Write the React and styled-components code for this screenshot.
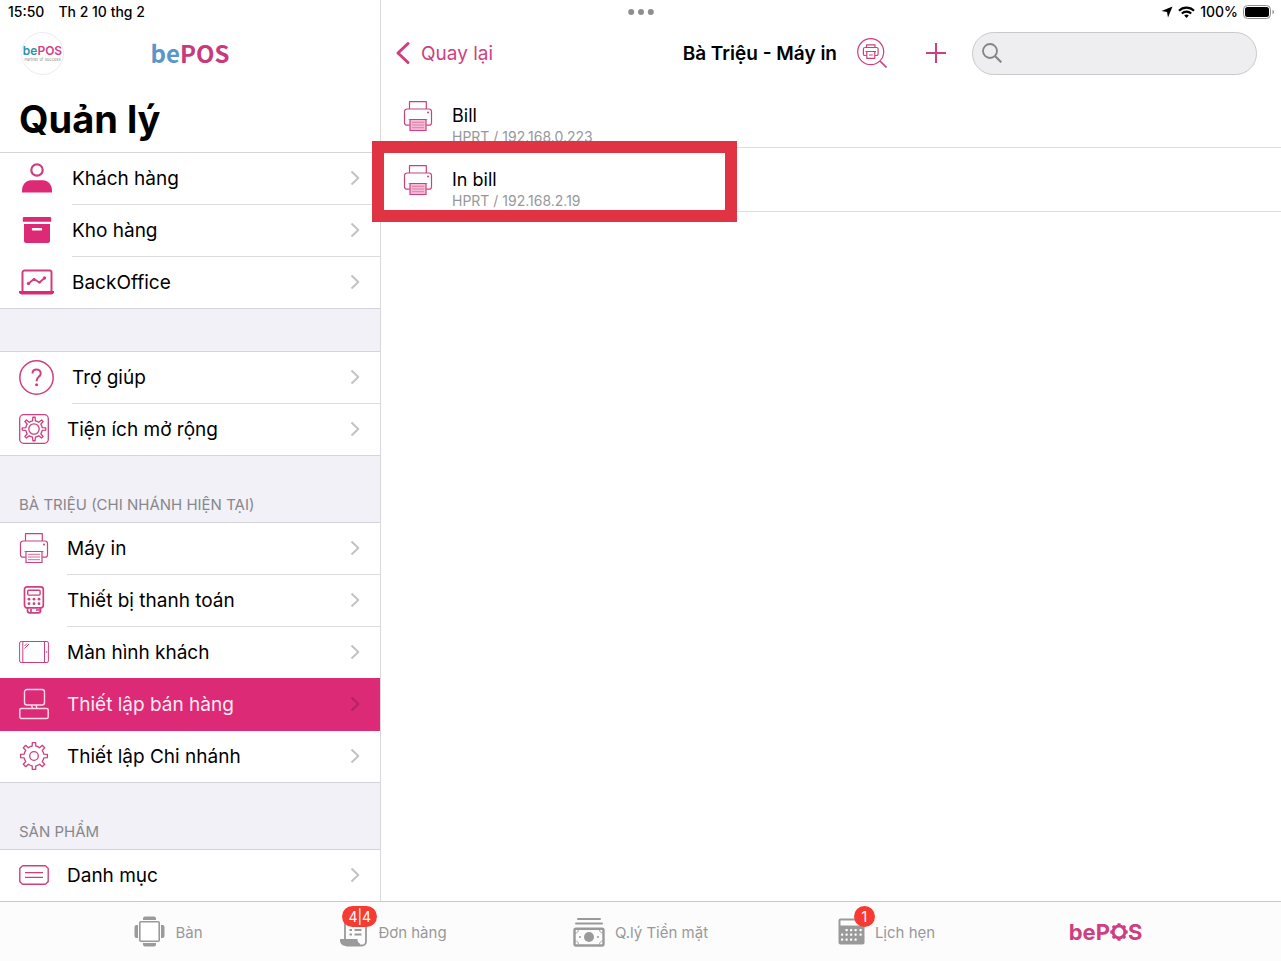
import React from 'react';
import styled, { createGlobalStyle, css } from 'styled-components';

const PINK = '#dc2a76';
const LINE_PINK = '#cf3f80';
const GREY = '#9a9a9a';

const GlobalStyle = createGlobalStyle`
  *, *::before, *::after { box-sizing: border-box; }
  body {
    margin: 0;
    background: #fff;
    color: #000;
    font-family: Inter, "Liberation Sans", sans-serif;
  }
  button, input { font: inherit; color: inherit; }
  h1, h2, h3, p, ul { margin: 0; padding: 0; }
  svg { display: block; flex: none; }
`;

/* ---------- shell ---------- */

const Screen = styled.div`
  position: relative;
  display: flex;
  flex-direction: column;
  height: 100vh;
  overflow: hidden;
`;

const StatusBar = styled.header`
  position: absolute;
  inset: 0 0 auto 0;
  z-index: 3;
  display: grid;
  grid-template-columns: 1fr auto 1fr;
  align-items: center;
  height: 24px;
  padding: 0 6px;
  font-size: 14px;
  font-weight: 500;
  line-height: 24px;
`;

const StatusSide = styled.div`
  display: flex;
  align-items: center;
  justify-content: ${(p) => (p.$end ? 'flex-end' : 'flex-start')};
  gap: ${(p) => (p.$end ? '5px' : '14px')};
  padding-left: 2px;
`;

const Split = styled.div`
  flex: 1;
  min-height: 0;
  display: flex;
`;

const Sidebar = styled.aside`
  flex: none;
  width: 381px;
  max-width: 45%;
  padding-top: 24px;
  border-right: 1px solid #d9d9dc;
  overflow-y: auto;
  scrollbar-width: none;
`;

const Detail = styled.main`
  flex: 1;
  min-width: 0;
  padding-top: 24px;
`;

/* ---------- sidebar ---------- */

const BrandBar = styled.div`
  display: grid;
  grid-template-columns: 1fr auto 1fr;
  align-items: center;
  height: 58px;
  padding: 0 21px;
`;

const Avatar = styled.div`
  display: flex;
  flex-direction: column;
  align-items: center;
  justify-content: center;
  width: 43px;
  height: 43px;
  border: 1px solid #ececee;
  border-radius: 50%;
`;

const Brand = styled.span`
  font-family: "Noto Sans CJK SC", "Open Sans", sans-serif;
  font-size: 24px;
  line-height: 32px;
  font-weight: 700;
  color: #c93a7d;
  span { color: #5b96c8; }
`;

const AvatarBrand = styled.span`
  font-size: 12px;
  line-height: 12px;
  font-weight: 600;
  color: #d43f87;
  span { color: #2d93a8; }
`;

const AvatarTag = styled.span`
  font-size: 4px;
  line-height: 5px;
  color: #8a8a8a;
  white-space: nowrap;
`;

const PageTitle = styled.h1`
  height: 70px;
  padding: 13px 19px 0;
  font-size: 38px;
  line-height: 48px;
  font-weight: 700;
`;

const SectionHead = styled.h2`
  display: flex;
  align-items: flex-end;
  height: ${(p) => (p.$empty ? '42px' : '66px')};
  padding: 0 19px 7px;
  background: #f1f1f7;
  color: #87878c;
  font-size: 15px;
  line-height: 20px;
  font-weight: 400;
`;

const Group = styled.ul`
  list-style: none;
  border-top: 1px solid #d4d4da;
  border-bottom: 1px solid #d4d4da;
`;

const Row = styled.a`
  display: flex;
  align-items: stretch;
  gap: 18px;
  height: 52px;
  padding-left: 19px;
  color: #000;
  text-decoration: none;
  ${(p) => p.$active && css`
    position: relative;
    height: 53px;
    margin-top: -1px;
    background: ${PINK};
    color: #ffeaf3;
  `}
`;

const RowItem = styled.li`
  &:last-child > a { height: 51px; }
  &:last-child > a > span:last-child { border-bottom: 0; }
`;

const IconSlot = styled.span`
  flex: none;
  display: flex;
  align-items: center;
  justify-content: center;
  width: ${(p) => (p.$wide ? '35px' : '30px')};
  padding-bottom: 2px;
`;

const RowBody = styled.span`
  flex: 1;
  display: flex;
  align-items: center;
  justify-content: space-between;
  padding: 0 20px 1px 0;
  border-bottom: 1px solid ${(p) => (p.$active ? 'transparent' : '#dddde0')};
  font-size: 19px;
  line-height: 26px;
`;

const Label = styled.span`
  padding-top: 2px;
`;

/* ---------- detail panel ---------- */

const Toolbar = styled.div`
  display: flex;
  align-items: center;
  height: 58px;
  padding: 0 24px 0 14px;
`;

const PlainButton = styled.button`
  display: flex;
  align-items: center;
  gap: 10px;
  padding: 0;
  border: 0;
  background: none;
  color: ${LINE_PINK};
  font-size: 19px;
  line-height: 26px;
  cursor: pointer;
`;

const DetailTitle = styled.h2`
  margin: 0 20px 0 auto;
  padding-top: 2px;
  font-size: 19px;
  line-height: 26px;
  font-weight: 600;
  white-space: nowrap;
`;

const Actions = styled.div`
  display: flex;
  align-items: center;
  gap: 38px;
  margin-right: 25px;
`;

const SearchBox = styled.label`
  flex: 0 1 285px;
  display: flex;
  align-items: center;
  gap: 8px;
  min-width: 120px;
  height: 43px;
  padding: 0 16px 0 9px;
  border: 1px solid #c9c9cd;
  border-radius: 22px;
  background: #eeeef0;
`;

const SearchInput = styled.input`
  flex: 1;
  min-width: 0;
  border: 0;
  outline: 0;
  background: none;
  font-size: 18px;
`;

const PrinterList = styled.ul`
  padding-top: 2px;
  list-style: none;
`;

const PrinterRow = styled.li`
  position: relative;
  display: flex;
  gap: 19px;
  height: 64px;
  padding: 16px 22px 0;
  border-bottom: 1px solid #dddde0;
`;

const PrinterText = styled.div`
  display: flex;
  flex-direction: column;
  padding-top: 3px;
`;

const PrinterName = styled.h3`
  font-size: 18px;
  line-height: 26px;
  font-weight: 400;
`;

const PrinterAddress = styled.p`
  font-size: 14px;
  line-height: 16px;
  color: #98989c;
`;

const Highlight = styled.div`
  position: absolute;
  z-index: 2;
  top: -7px;
  left: -9px;
  width: 365px;
  height: 81px;
  border: 12px solid #e03445;
  pointer-events: none;
`;

/* ---------- tab bar ---------- */

const TabBar = styled.nav`
  flex: none;
  display: grid;
  grid-template-columns: 205fr 245fr 249fr 243fr 195fr;
  height: 60px;
  padding: 0 78px 0 66px;
  border-top: 1px solid #c9c9cc;
  background: #fcfcfc;
  z-index: 1;
`;

const Tab = styled.a`
  display: flex;
  align-items: center;
  justify-content: center;
  gap: 10px;
  color: #98989a;
  font-size: 15px;
  line-height: 20px;
  text-decoration: none;
  white-space: nowrap;
`;

const TabIcon = styled.span`
  position: relative;
  display: flex;
`;

const Badge = styled.span`
  position: absolute;
  top: ${(p) => (p.$round ? '-12px' : '-10px')};
  left: ${(p) => (p.$round ? '16px' : '2px')};
  min-width: 21px;
  height: 21px;
  padding: 0 6px;
  border-radius: 11px;
  background: #f63c32;
  color: #fff;
  font-size: 14px;
  line-height: 21px;
  text-align: center;
`;

const TabBrand = styled.span`
  display: flex;
  align-items: center;
  color: ${LINE_PINK};
  font-size: 22px;
  line-height: 26px;
  font-weight: 700;
`;

/* ---------- icons ---------- */

function gearPath(cx, cy, teeth, outer, inner, tip = 0.2, root = 0.3) {
  const step = (Math.PI * 2) / teeth;
  const pt = (r, a) => `${(cx + r * Math.sin(a)).toFixed(2)} ${(cy - r * Math.cos(a)).toFixed(2)}`;
  let d = '';
  for (let i = 0; i < teeth; i += 1) {
    const a = i * step;
    d += `${i ? 'L' : 'M'}${pt(outer, a - tip * step)}L${pt(outer, a + tip * step)}L${pt(inner, a + root * step)}`;
    d += `A${inner} ${inner} 0 0 1 ${pt(inner, a + (1 - root) * step)}`;
  }
  return `${d}Z`;
}

const Svg = ({ w, h, children, ...rest }) => (
  <svg width={w} height={h} viewBox={`0 0 ${w} ${h}`} fill="none" stroke={LINE_PINK} strokeWidth="1.3" strokeLinejoin="round" aria-hidden="true" {...rest}>
    {children}
  </svg>
);

const CustomerIcon = () => (
  <Svg w={35} h={30} stroke="none" fill={PINK}>
    <circle cx="18" cy="7" r="5.700" fill="none" stroke={LINE_PINK} strokeWidth="2.200" />
    <path d="M3 29.500v-1.700C3 21.500 7 17.300 12 17.300h12c5 0 9 4.200 9 10.500v1.700z" />
  </Svg>
);

const BoxIcon = () => (
  <Svg w={35} h={28} stroke="none" fill={PINK}>
    <path d="M5 1h26a1.200 1.200 0 0 1 1.200 1.200v3.600H3.800V2.200A1.200 1.200 0 0 1 5 1z" />
    <path fillRule="evenodd" d="M5 8h26v17a2 2 0 0 1-2 2H7a2 2 0 0 1-2-2zm9 4a1 1 0 0 0 0 2.500h8a1 1 0 0 0 0-2.500z" />
  </Svg>
);

const LaptopIcon = () => (
  <Svg w={35} h={26} strokeWidth="2">
    <path d="M3.500 22V3.500a2 2 0 0 1 2-2h25a2 2 0 0 1 2 2V22" />
    <path d="M0 22h35a3 3 0 0 1-2.500 3.500h-30A3 3 0 0 1 0 22z" fill={PINK} stroke="none" />
    <path d="M9.500 14.500l5.500-4.500 5.500 3.500 5-4.500" strokeWidth="1.800" />
    <g fill={LINE_PINK} stroke="none">
      <circle cx="9.500" cy="14.500" r="1.700" /><circle cx="15" cy="10.300" r="1.300" />
      <circle cx="20.500" cy="13.300" r="1.300" /><circle cx="25.500" cy="9" r="1.700" />
    </g>
  </Svg>
);

const HelpIcon = () => (
  <Svg w={35} h={35} strokeWidth="1.500">
    <circle cx="17.500" cy="17.500" r="16.700" />
    <path d="M13.500 13.500c0-2.500 1.700-4 4-4s4.200 1.500 4.200 3.900c0 3.300-4 3.400-4 7.200v.6" strokeWidth="2" />
    <circle cx="17.600" cy="24.800" r="1.500" fill={LINE_PINK} stroke="none" />
  </Svg>
);

const ExtensionIcon = () => (
  <Svg w={30} h={30}>
    <rect x="0.700" y="0.700" width="28.600" height="28.600" rx="4" />
    <path d={gearPath(15, 15, 8, 11.800, 8.300, 0.12, 0.22)} />
    <circle cx="15" cy="15" r="5.200" />
  </Svg>
);

const GearIcon = () => (
  <Svg w={30} h={30}>
    <path d={gearPath(15, 15, 8, 13.500, 10, 0.16, 0.24)} />
    <circle cx="15" cy="15" r="4.300" />
  </Svg>
);

const PrinterIcon = ({ tinted }) => (
  <Svg w={30} h={32} strokeWidth="1.200">
    <path d="M6.500 9V1.600h16.800V9" />
    <path d="M6.500 25.200H4a2.500 2.500 0 0 1-2.500-2.500V11.500A2.500 2.500 0 0 1 4 9h22a2.500 2.500 0 0 1 2.500 2.500v11.200a2.500 2.500 0 0 1-2.500 2.500h-2.700" />
    <circle cx="25" cy="12.600" r="1" fill={LINE_PINK} stroke="none" />
    <path d="M7 19.500h16v11H7z" fill={tinted ? '#f3bdd6' : '#fff'} />
    <path d="M5.500 19.500h19M9 22.300h12M9 25h12M9 27.700h12" strokeWidth={tinted ? 0.5 : 0.8} />
  </Svg>
);

const TerminalIcon = () => (
  <Svg w={30} h={30} strokeWidth="1.700">
    <rect x="5.500" y="1.800" width="18.800" height="21" rx="2.500" />
    <rect x="8.700" y="5.300" width="12.400" height="4.800" rx="1" strokeWidth="1.400" />
    <g fill={LINE_PINK} stroke="none">
      {[14.200, 18.700].map((y) => [10, 15, 20].map((x) => <circle key={`${x}${y}`} cx={x} cy={y} r="1.400" />))}
    </g>
    <path d="M8.500 23v2.800a2 2 0 0 0 2 2h9a2 2 0 0 0 2-2V23M12 24v3.500M17 25h4" />
  </Svg>
);

const DisplayIcon = () => (
  <Svg w={30} h={24} strokeWidth="1">
    <rect x="0.600" y="1.500" width="28.800" height="21" rx="1.500" />
    <path d="M3.800 1.500v21M25.500 1.500v21M5.500 6l2.500-2.500M5.500 8.500l4.500-4.500" />
    <circle cx="27.500" cy="12" r="0.800" fill={LINE_PINK} stroke="none" />
  </Svg>
);

const RegisterIcon = () => (
  <Svg w={30} h={32} stroke="#fbdcea" strokeWidth="1.400">
    <rect x="5.500" y="1.500" width="20" height="15.500" rx="2.500" />
    <path d="M12.500 17l1 3.500M17 17l1 3.500" />
    <rect x="0.800" y="20.500" width="28.400" height="10" rx="1.500" />
  </Svg>
);

const CategoryIcon = () => (
  <Svg w={30} h={20} strokeWidth="1.400">
    <path d="M4 .8h22c1.500 0 1.800 1.600 3.200 2.600v13.200c-1.400 1-1.700 2.600-3.200 2.600H4c-1.500 0-1.800-1.600-3.200-2.600V3.400C2.200 2.400 2.500.8 4 .8z" />
    <path d="M6 7.600h18M6 12.400h18" />
  </Svg>
);

const Chevron = ({ active }) => (
  <Svg w={10} h={16} stroke={active ? '#b02462' : '#c3c3c7'} strokeWidth="2">
    <path d="M1.500 1.500L8.300 8l-6.800 6.500" />
  </Svg>
);

const BackIcon = () => (
  <Svg w={16} h={24} strokeWidth="3" strokeLinecap="round">
    <path d="M13 2.500L3 12l10 9.500" />
  </Svg>
);

const FindPrinterIcon = () => (
  <Svg w={30} h={30} strokeWidth="1.200">
    <circle cx="13.700" cy="13.700" r="13" />
    <path d="M23 23l6.500 6.500" strokeWidth="1.600" />
    <path d="M9.500 9.500V6.800h8.500v2.700M9.500 17.500H8a1.600 1.600 0 0 1-1.600-1.600V11A1.600 1.600 0 0 1 8 9.500h11.500a1.600 1.600 0 0 1 1.600 1.600v4.800a1.600 1.600 0 0 1-1.600 1.600H18" />
    <path d="M9.800 13.500h8v6.800h-8zM8.500 13.500h10.500M12 17h3.800" />
  </Svg>
);

const PlusIcon = () => (
  <Svg w={22} h={22} strokeWidth="2">
    <path d="M11 1v20M1 11h20" />
  </Svg>
);

const SearchIcon = () => (
  <Svg w={20} h={20} stroke="#858589" strokeWidth="1.800">
    <circle cx="8" cy="8" r="7" />
    <path d="M13 13l6.300 6.300" strokeWidth="2.200" />
  </Svg>
);

const LocationIcon = () => (
  <Svg w={12} h={12} fill="#000" stroke="none">
    <path d="M11.500.5L7 11.500 6 6 .5 5z" />
  </Svg>
);

const WifiIcon = () => (
  <Svg w={17} h={12} stroke="#000" strokeWidth="2.100">
    <path d="M1 4.700a10.700 10.700 0 0 1 15 0M3.800 7.600a6.700 6.700 0 0 1 9.400 0" />
    <path d="M8.500 12l-2.300-2.500a3.300 3.300 0 0 1 4.600 0z" fill="#000" stroke="none" />
  </Svg>
);

const BatteryIcon = () => (
  <Svg w={32} h={14} stroke="#8e8e90" strokeWidth="1">
    <rect x="0.500" y="0.500" width="27" height="13" rx="4" />
    <rect x="2" y="2" width="24" height="10" rx="2.500" fill="#000" stroke="none" />
    <path d="M29.500 5v4c1-.3 1.500-1 1.500-2s-.5-1.700-1.500-2z" fill="#8e8e90" stroke="none" />
  </Svg>
);

const DotsIcon = () => (
  <Svg w={26} h={6} fill="#8e8e90" stroke="none">
    <circle cx="3.200" cy="3" r="3" /><circle cx="13" cy="3" r="3" /><circle cx="22.800" cy="3" r="3" />
  </Svg>
);

const TableIcon = () => (
  <Svg w={31} h={31} fill={GREY} stroke="none">
    <path d="M9 4V2.500A2 2 0 0 1 11 .5h9a2 2 0 0 1 2 2V4zM9 27v1.500a2 2 0 0 0 2 2h9a2 2 0 0 0 2-2V27zM4 9H2.500a2 2 0 0 0-2 2v9a2 2 0 0 0 2 2H4zM27 9h1.500a2 2 0 0 1 2 2v9a2 2 0 0 1-2 2H27z" />
    <rect x="5.800" y="5.800" width="19.400" height="19.400" rx="1" fill="#fff" stroke={GREY} strokeWidth="1.600" />
  </Svg>
);

const OrderIcon = () => (
  <Svg w={28} h={31} stroke={GREY} strokeWidth="1.800">
    <path d="M5 24V3h21v22.500a4 4 0 0 1-4 4H6" />
    <path d="M0 23h17.500c0 2.500.8 4 2.500 4.500v2.500H5.500A5.500 5.500 0 0 1 0 24z" fill={GREY} stroke="none" />
    <path d="M9.500 14h2.500M14.500 14h7M9.500 18.500h2.500M14.500 18.500h7" strokeWidth="2" />
  </Svg>
);

const CashIcon = () => (
  <Svg w={32} h={30} stroke={GREY} strokeWidth="2">
    <path d="M5 2h22M3 6.500h26" strokeLinecap="round" />
    <rect x="1.500" y="11.800" width="29" height="16.700" rx="1.500" strokeWidth="2.400" />
    <circle cx="16" cy="20" r="5" fill={GREY} stroke="none" />
    <path d="M2 16c2.200 0 3.500-1.300 3.500-3.500M26.500 12.500c0 2.200 1.300 3.500 3.500 3.500M2 24c2.200 0 3.500 1.300 3.500 3.500M26.500 27.500c0-2.200 1.300-3.500 3.500-3.500" strokeWidth="0.900" />
    <circle cx="7" cy="20" r="1" fill={GREY} stroke="none" /><circle cx="25" cy="20" r="1" fill={GREY} stroke="none" />
  </Svg>
);

const CalendarIcon = () => (
  <Svg w={27} h={27} stroke="none" fill={GREY}>
    <rect x="0.500" y="0.500" width="26" height="26" rx="2" />
    <rect x="2.500" y="2.500" width="22" height="5" fill="#fff" />
    <g fill="#fff">
      {[11, 15.500, 20.500].map((y, r) => [3, 7.500, 12, 16.500, 21.500].map((x, c) => (
        (r === 0 && c === 0) || (r === 2 && c === 4) ? null : <rect key={`${x}${y}`} x={x} y={y} width="2.200" height="2.200" rx="0.600" />
      )))}
    </g>
  </Svg>
);

const BrandGear = () => (
  <svg width="18" height="18" viewBox="0 0 18 18" aria-hidden="true">
    <path d={`${gearPath(9, 9, 8, 8.800, 7.400, 0.2, 0.3)}M9 4.600a4.400 4.400 0 1 0 0 8.800a4.400 4.400 0 1 0 0-8.800z`} fill={LINE_PINK} fillRule="evenodd" />
  </svg>
);

/* ---------- data ---------- */

const SECTIONS = [
  {
    id: 'main',
    rows: [
      { label: 'Khách hàng', icon: CustomerIcon, wide: true },
      { label: 'Kho hàng', icon: BoxIcon, wide: true },
      { label: 'BackOffice', icon: LaptopIcon, wide: true },
    ],
  },
  {
    id: 'support',
    spacer: true,
    rows: [
      { label: 'Trợ giúp', icon: HelpIcon, wide: true },
      { label: 'Tiện ích mở rộng', icon: ExtensionIcon },
    ],
  },
  {
    id: 'branch',
    title: 'BÀ TRIỆU (CHI NHÁNH HIỆN TẠI)',
    rows: [
      { label: 'Máy in', icon: PrinterIcon },
      { label: 'Thiết bị thanh toán', icon: TerminalIcon },
      { label: 'Màn hình khách', icon: DisplayIcon },
      { label: 'Thiết lập bán hàng', icon: RegisterIcon, active: true },
      { label: 'Thiết lập Chi nhánh', icon: GearIcon },
    ],
  },
  {
    id: 'products',
    title: 'SẢN PHẨM',
    rows: [{ label: 'Danh mục', icon: CategoryIcon }],
  },
];

const PRINTERS = [
  { name: 'Bill', address: 'HPRT / 192.168.0.223' },
  { name: 'In bill', address: 'HPRT / 192.168.2.19', highlighted: true },
];

const TABS = [
  { label: 'Bàn', icon: TableIcon },
  { label: 'Đơn hàng', icon: OrderIcon, badge: '4|4' },
  { label: 'Q.lý Tiền mặt', icon: CashIcon },
  { label: 'Lịch hẹn', icon: CalendarIcon, badge: '1' },
];

export default function App() {
  return (
    <>
      <GlobalStyle />
      <Screen>
        <StatusBar>
          <StatusSide>
            <span>15:50</span>
            <span>Th 2 10 thg 2</span>
          </StatusSide>
          <DotsIcon />
          <StatusSide $end>
            <LocationIcon />
            <WifiIcon />
            <span>100%</span>
            <BatteryIcon />
          </StatusSide>
        </StatusBar>

        <Split>
          <Sidebar>
            <BrandBar>
              <Avatar>
                <AvatarBrand><span>be</span>POS</AvatarBrand>
                <AvatarTag>Partner of Success</AvatarTag>
              </Avatar>
              <Brand><span>be</span>POS</Brand>
            </BrandBar>
            <PageTitle>Quản lý</PageTitle>
            {SECTIONS.map((section) => (
              <section key={section.id}>
                {section.title && <SectionHead>{section.title}</SectionHead>}
                {section.spacer && <SectionHead as="div" $empty />}
                <Group>
                  {section.rows.map(({ label, icon: Icon, wide, active }) => (
                    <RowItem key={label}>
                      <Row href="#" $active={active} aria-current={active ? 'page' : undefined}>
                        <IconSlot $wide={wide}><Icon /></IconSlot>
                        <RowBody $active={active}>
                          <Label>{label}</Label>
                          <Chevron active={active} />
                        </RowBody>
                      </Row>
                    </RowItem>
                  ))}
                </Group>
              </section>
            ))}
          </Sidebar>

          <Detail>
            <Toolbar>
              <PlainButton type="button"><BackIcon /><Label>Quay lại</Label></PlainButton>
              <DetailTitle>Bà Triệu - Máy in</DetailTitle>
              <Actions>
                <PlainButton type="button" aria-label="Tìm máy in"><FindPrinterIcon /></PlainButton>
                <PlainButton type="button" aria-label="Thêm"><PlusIcon /></PlainButton>
              </Actions>
              <SearchBox>
                <SearchIcon />
                <SearchInput type="search" aria-label="Tìm kiếm" />
              </SearchBox>
            </Toolbar>
            <PrinterList>
              {PRINTERS.map(({ name, address, highlighted }) => (
                <PrinterRow key={address}>
                  <PrinterIcon tinted />
                  <PrinterText>
                    <PrinterName>{name}</PrinterName>
                    <PrinterAddress>{address}</PrinterAddress>
                  </PrinterText>
                  {highlighted && <Highlight />}
                </PrinterRow>
              ))}
            </PrinterList>
          </Detail>
        </Split>

        <TabBar>
          {TABS.map(({ label, icon: Icon, badge }) => (
            <Tab key={label} href="#">
              <TabIcon>
                <Icon />
                {badge && <Badge $round={badge.length === 1}>{badge}</Badge>}
              </TabIcon>
              <Label>{label}</Label>
            </Tab>
          ))}
          <Tab href="#" aria-label="bePOS">
            <TabBrand>beP<BrandGear />S</TabBrand>
          </Tab>
        </TabBar>
      </Screen>
    </>
  );
}
